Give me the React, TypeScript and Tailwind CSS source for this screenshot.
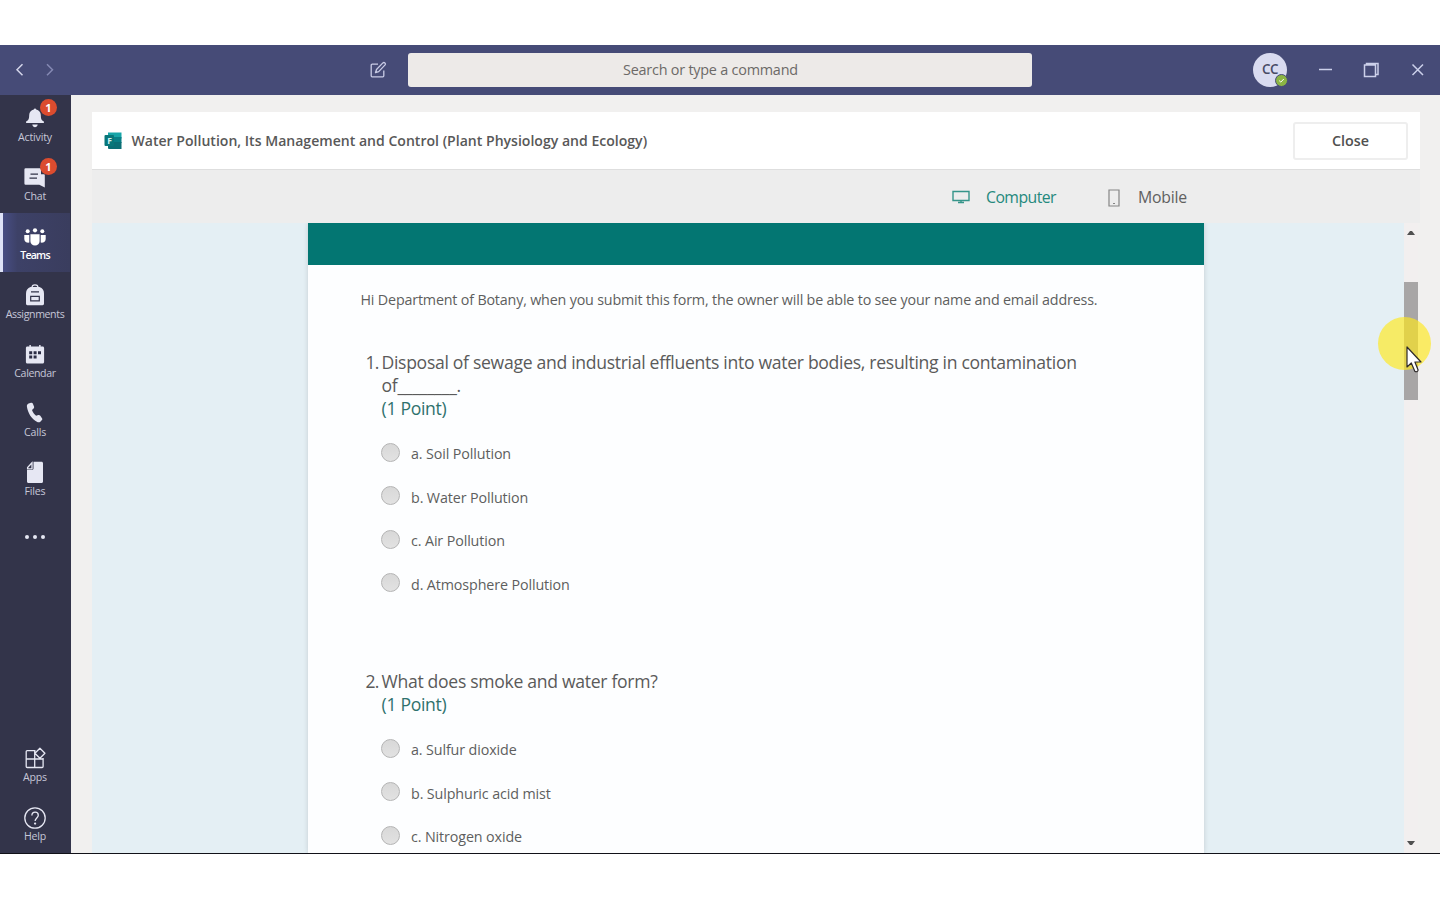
import React from "react";

const svg = { width: 24, height: 24, viewBox: "0 0 24 24" };
const line = { fill: "none", stroke: "currentColor", strokeWidth: 1.3 };

const BellIcon = () => (
  <svg {...svg} fill="currentColor">
    <path d="M12 1.500c.7 0 1.100.4 1.200 1 2.800.6 4.500 2.700 4.600 5.600.1 3.800.6 5.300 3.100 6.500v1.400H3.100v-1.400c2.500-1.200 3-2.700 3.100-6.500.1-2.900 1.800-5 4.600-5.600.1-.6.5-1 1.200-1z" />
    <path d="M9.300 17.500h5.400c-.3 1.700-1.400 2.700-2.700 2.700s-2.400-1-2.700-2.700z" />
  </svg>
);
const ChatIcon = () => (
  <svg {...svg}>
    <path fill="currentColor" d="M2.600 2.200h14.200a1.200 1.200 0 0 1 1.200 1.200v4.800h2.900a.9.900 0 0 1 .9.900v12.300l-5.500-2.600H2.600a1.200 1.200 0 0 1-1.200-1.200V3.400a1.200 1.200 0 0 1 1.200-1.200z" />
    <path stroke="#33344A" strokeWidth="1.200" d="M7.500 8.200h7.500M6.500 12.200h7.500" />
  </svg>
);
const TeamsIcon = () => (
  <svg {...svg} fill="currentColor">
    <circle cx="4.700" cy="6.300" r="2" />
    <circle cx="12" cy="5.300" r="2.100" />
    <circle cx="19.300" cy="6.300" r="2" />
    <path d="M1.300 10h5v7.600c-3 .3-5-1.100-5-3.600zM22.700 10h-5v7.600c3 .3 5-1.100 5-3.600z" />
    <path d="M7.400 9.300h9.200v6.700c0 2.800-1.900 4.600-4.600 4.600s-4.600-1.800-4.600-4.600z" />
  </svg>
);
const AssignmentsIcon = () => (
  <svg {...svg}>
    <path {...line} d="M9 3.500c0-2 1.200-2.700 3-2.700s3 .7 3 2.700" />
    <path fill="currentColor" d="M7.500 3h9c3 1.200 4.500 3.300 4.500 6.300v10.500c0 .8-.6 1.400-1.400 1.400H4.400c-.8 0-1.400-.6-1.400-1.400V9.300C3 6.300 4.500 4.200 7.500 3z" />
    <path fill="none" stroke="#33344A" strokeWidth="1.200" d="M8 7.800h8M7.700 12.400h8.600v4.400H7.700z" />
  </svg>
);
const CalendarIcon = () => (
  <svg {...svg}>
    <path fill="currentColor" d="M6.400 2h1.500v1.500h8.200V2h1.500v1.500h2c.9 0 1.500.6 1.500 1.500v14c0 .9-.6 1.500-1.500 1.500H4.400c-.9 0-1.500-.6-1.500-1.500V5c0-.9.6-1.500 1.500-1.500h2z" />
    <path fill="#2B2C45" d="M6.200 8.300h3v3h-3zM10.600 8.300h3v3h-3zM15 8.300h3v3h-3zM6.200 12.600h3v3h-3zM10.600 12.600h3v3h-3z" />
  </svg>
);
const PhoneIcon = () => (
  <svg {...svg} fill="currentColor">
    <path d="M5.600 1.600 8 .8c.8-.2 1.500.1 1.800.8l1.200 3c.3.700.1 1.400-.4 1.900L9 7.900c.9 2.400 2.200 4.300 4.100 5.800l2.200-.7c.7-.2 1.400 0 1.800.6l1.900 2.600c.4.600.4 1.300-.1 1.800l-1.300 1.400c-.9.9-2.200 1.200-3.300.6C8.500 17 4.900 11.400 3.900 4.600c-.2-1.300.5-2.600 1.700-3z" />
  </svg>
);
const FilesIcon = () => (
  <svg {...svg}>
    <path fill="currentColor" d="M10.500.8h8c.9 0 1.500.6 1.500 1.500v18.200c0 .9-.6 1.500-1.500 1.500h-13c-.9 0-1.500-.6-1.500-1.500V9.100h5c.9 0 1.500-.6 1.500-1.500z" />
    <path {...line} d="M9 1.800 4.600 6.500v1.300H9z" />
  </svg>
);
const AppsIcon = () => (
  <svg {...svg} {...line}>
    <path d="M12.500 3.600H4.200a1 1 0 0 0-1 1v14.900a1 1 0 0 0 1 1h14.900a1 1 0 0 0 1-1V11M3.200 12h16.900M11.700 3.600v16.900M16.900 1.300l5 5-5 5-5-5z" strokeLinejoin="round" />
  </svg>
);
const HelpIcon = () => (
  <svg {...svg} {...line}>
    <circle cx="12" cy="12" r="10.200" />
    <path d="M8.900 9.400c0-2 1.300-3.200 3.200-3.200s3.200 1.200 3.200 3c0 2.600-3.200 2.900-3.200 5.900" />
    <circle cx="12.100" cy="17.600" r=".5" fill="currentColor" />
  </svg>
);

type Item = { label: string; Icon: () => React.JSX.Element; badge?: boolean; active?: boolean };
const items: Item[] = [
  { label: "Activity", Icon: BellIcon, badge: true },
  { label: "Chat", Icon: ChatIcon, badge: true },
  { label: "Teams", Icon: TeamsIcon, active: true },
  { label: "Assignments", Icon: AssignmentsIcon },
  { label: "Calendar", Icon: CalendarIcon },
  { label: "Calls", Icon: PhoneIcon },
  { label: "Files", Icon: FilesIcon },
];

function NavItem({ label, Icon, badge, active }: Item) {
  return (
    <div
      className={
        "relative flex h-[59px] w-full shrink-0 flex-col items-center pt-3 " +
        (active ? "bg-gradient-to-r from-[#4a508a] via-[#3d4167] via-25% to-[#3a3d5e] text-white" : "text-[#e6e7f3]")
      }
    >
      {active && <span className="absolute inset-y-0 left-0 w-[3px] bg-[#dfe3f8]" />}
      <Icon />
      <span
        className={
          "-mt-0.5 whitespace-nowrap text-[10.600px] leading-4 " +
          (active
            ? "font-semibold tracking-[-0.800px]"
            : label === "Assignments" || label === "Calendar"
              ? "tracking-[-0.380px] text-[#c6c7d8]"
              : "tracking-[-0.180px] text-[#c6c7d8]")
        }
      >
        {label}
      </span>
      {badge && (
        <span className="absolute left-10 top-1 flex size-[17px] items-center justify-center rounded-full bg-[#db4c2f] text-[11px] font-bold leading-none text-white">
          1
        </span>
      )}
    </div>
  );
}

function Question({ n, lines, options }: { n: number; lines: string[]; options: string[] }) {
  return (
    <section className="flex flex-col">
      <div className="flex text-[17.600px] leading-[23.200px] text-[#5a5a5a]">
        <span className="w-[21.500px] shrink-0 pr-[3px] text-right tracking-[-0.800px]">{n}.</span>
        <div className="flex flex-col whitespace-nowrap tracking-[-0.310px]">
          {lines.map((l) => (
            <span key={l}>{l}</span>
          ))}
          <span className="text-[#2f716d]">(1 Point)</span>
        </div>
      </div>
      <div className="flex flex-col pl-[21px] pt-[11.500px]">
        {options.map((o) => (
          <label key={o} className="flex h-[43.500px] items-center">
            <span className="-mt-[3px] size-[19px] rounded-full border border-[#b4b4b4] bg-gradient-to-b from-[#d8d8d8] to-[#e2e2e2]" />
            <span className="ml-[11px] text-[14.300px] tracking-[-0.120px] text-[#5e5e5e]">{o}</span>
          </label>
        ))}
      </div>
    </section>
  );
}

export default function App() {
  return (
    <div className="flex h-[900px] w-[1440px] flex-col overflow-hidden bg-white pt-[45px] font-['Open_Sans',sans-serif]">
      <header className="flex h-[50px] shrink-0 items-center bg-[#464b77] text-[#c9cce6]">
        <div className="flex w-[408px] items-center">
          <svg width="60" height="24" viewBox="0 0 60 24" fill="none" strokeWidth="1.500">
            <path d="M22.500 6.200 17 11.700l5.500 5.500" stroke="#d4d6ea" />
            <path d="M47 6.200l5.500 5.500-5.500 5.500" stroke="#8589b3" />
          </svg>
          <svg className="ml-[309px]" width="18" height="18" viewBox="0 0 18 18" fill="none" stroke="currentColor" strokeWidth="1.300">
            <path d="M9 3.200H3.200a1 1 0 0 0-1 1v10.600a1 1 0 0 0 1 1h10.600a1 1 0 0 0 1-1V9.500" />
            <path d="M6.500 11.700l1-3.200 6.400-6.600c1.300-1.200 3.400.6 2.200 2l-6.400 6.700z" strokeLinejoin="round" />
          </svg>
        </div>
        <div className="-mt-px flex h-[34px] w-[624px] items-center rounded-[3px] bg-[#edeae8] pl-[215px] text-[14.400px] tracking-[-0.220px] text-[#6c6967]">
          Search or type a command
        </div>
        <div className="-mt-px flex flex-1 items-center">
          <div className="relative ml-[221px] flex size-[34px] items-center justify-center rounded-full bg-[#d9dbf0] text-[13.500px] font-semibold tracking-[-0.500px] text-[#484b66]">
            CC
            <span className="absolute left-[22px] top-[21px] flex size-[13px] items-center justify-center rounded-full border border-[#464b77] bg-[#8bb544]">
              <svg width="7" height="7" viewBox="0 0 7 7" fill="none" stroke="white" strokeWidth="1">
                <path d="M1.200 3.600l1.600 1.500L5.800 2" />
              </svg>
            </span>
          </div>
          <svg className="ml-[27px]" width="126" height="24" viewBox="0 0 126 24" fill="none" stroke="#ccd0ea" strokeWidth="1.500">
            <path d="M5 11.500h13" />
            <path d="M50.500 7h11v11.500h-11zM52.500 7V5.500h11.500v11h-2" />
            <path d="M98.500 6.500l10.500 10.500M109 6.500L98.500 17" />
          </svg>
        </div>
      </header>

      <div className="flex h-[758px] shrink-0">
        <nav className="flex w-[71px] shrink-0 flex-col items-center bg-[#33344a] pr-px">
          {items.map((it) => (
            <NavItem key={it.label} {...it} />
          ))}
          <div className="flex h-[58px] items-center gap-[4px] text-[#e6e7f3]">
            <i className="size-1 rounded-full bg-current" />
            <i className="size-1 rounded-full bg-current" />
            <i className="size-1 rounded-full bg-current" />
          </div>
          <div className="mt-auto flex w-full flex-col">
            <NavItem label="Apps" Icon={AppsIcon} />
            <NavItem label="Help" Icon={HelpIcon} />
          </div>
        </nav>

        <main className="flex flex-1 flex-col bg-[#f1f0ef] pl-[21px] pr-5 pt-[17px]">
          <div className="flex h-[58px] shrink-0 items-center border-b border-[#dedede] bg-white pl-3 pr-3">
            <svg width="18" height="18" viewBox="0 0 18 18">
              <path fill="#17a5a8" d="M4 .5h13.500v6H4z" />
              <path fill="#087f86" d="M10 5h7.500v6H10z" />
              <path fill="#0b6f75" d="M4 10h13.500v7H5a1 1 0 0 1-1-1z" />
              <rect x=".5" y="3" width="9.500" height="11" rx="1" fill="#08777a" />
              <text x="3.200" y="11.700" fontSize="8.500" fontWeight="700" fill="#d9f3f2">F</text>
            </svg>
            <h1 className="ml-[9.500px] whitespace-nowrap pt-px text-[14.070px] font-semibold text-[#585858]">
              Water Pollution, Its Management and Control (Plant Physiology and Ecology)
            </h1>
            <button className="ml-auto h-[38px] w-[115px] rounded-[3px] border-2 border-[#eeeeee] bg-white text-[14.300px] font-semibold text-[#505050]">
              Close
            </button>
          </div>

          <div className="flex h-[53px] shrink-0 items-center bg-[#ededed] pl-[860px] pt-0.5">
            <svg className="-mt-0.5" width="18" height="14" viewBox="0 0 18 14" fill="none" stroke="#36958a" strokeWidth="1.400">
              <path d="M1 1.500h16v9H1zM9 10.500V12M6 12.500h6" />
            </svg>
            <span className="ml-4 w-[70px] text-[15.800px] tracking-[-0.550px] text-[#25897d]">Computer</span>
            <svg className="ml-[52px]" width="12" height="18" viewBox="0 0 12 18" fill="none" stroke="#858585" strokeWidth="1.200">
              <path d="M1 1h10v16H1zM5 14.500h2" />
            </svg>
            <span className="ml-[18px] text-[15.800px] tracking-[-0.200px] text-[#606060]">Mobile</span>
          </div>

          <div className="flex min-h-0 flex-1">
            <div className="flex w-[1312px] shrink-0 overflow-hidden bg-[#e4eff4] pl-[216px]">
              <div className="w-[896px] bg-[#fdfeff] shadow-[0_0_5px_rgba(0,0,0,0.14)]">
                <div className="h-[42px] bg-[#037672]" />
                <p className="whitespace-nowrap pl-[52.500px] pt-[25px] text-[14.300px] leading-5 tracking-[-0.175px] text-[#5e5e5e]">
                  Hi Department of Botany, when you submit this form, the owner will be able to see your name and email address.
                </p>
                <div className="flex flex-col pl-[52px] pt-[41px]">
                  <Question
                    n={1}
                    lines={["Disposal of sewage and industrial effluents into water bodies, resulting in contamination", "of________."]}
                    options={["a. Soil Pollution", "b. Water Pollution", "c. Air Pollution", "d. Atmosphere Pollution"]}
                  />
                  <div className="mt-[64px]">
                    <Question
                      n={2}
                      lines={["What does smoke and water form?"]}
                      options={["a. Sulfur dioxide", "b. Sulphuric acid mist", "c. Nitrogen oxide"]}
                    />
                  </div>
                </div>
              </div>
            </div>
            <div className="relative flex w-[14px] shrink-0 flex-col items-center bg-[#f2efef]">
              <svg className="mt-[7px]" width="8" height="5" viewBox="0 0 8 5">
                <path d="M0 5L3 1h2l3 4z" fill="#505050" />
              </svg>
              <div className="mt-[47px] h-[118px] w-full bg-[#a8a6a6]" />
              <svg className="mb-[7px] mt-auto" width="8" height="5" viewBox="0 0 8 5">
                <path d="M0 0l3 4h2l3-4z" fill="#505050" />
              </svg>
              <span className="absolute -left-[26px] top-[94px] size-[53px] rounded-full bg-[#ffe81a]/65" />
              <svg className="absolute left-[2px] top-[123px]" width="16" height="28" viewBox="0 0 16 28">
                <path d="M1 1v20l4.300-4 3.500 8.300c1.400 1 3.200.2 3.300-1.300L8.900 16H15z" fill="white" stroke="#2e2a2a" strokeWidth="1.200" strokeLinejoin="round" />
              </svg>
            </div>
          </div>
        </main>
      </div>
      <div className="h-px shrink-0 bg-[#111118]" />
    </div>
  );
}
